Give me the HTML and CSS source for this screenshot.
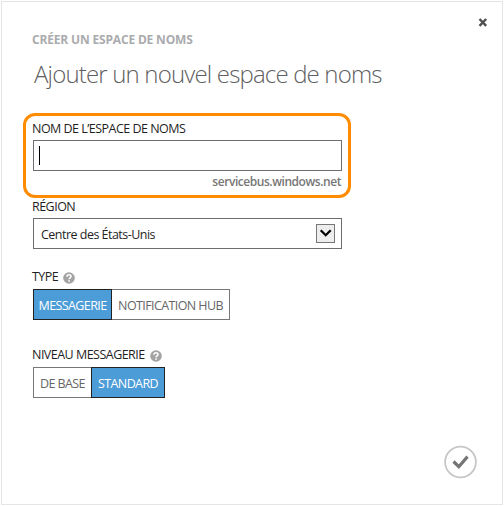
FILE: index.html
```html
<!DOCTYPE html>
<html lang="fr">
<head>
<meta charset="utf-8">
<title>Ajouter un nouvel espace de noms</title>
<link rel="stylesheet" href="styles.css">
</head>
<body>
<main class="dialog">
  <button class="close" aria-label="Fermer"><svg width="10" height="9" viewBox="0 0 10 9"><path d="M1.5 1 8.2 7.8M8.2 1 1.5 7.8" stroke="#505050" stroke-width="2.4" fill="none"/></svg></button>
  <p class="crumb"><span>CRÉER UN ESPACE DE NOMS</span></p>
  <h1 class="title"><span>Ajouter un nouvel espace de noms</span></h1>
  <section class="field name-field">
    <div class="label"><span>NOM DE L’ESPACE DE NOMS</span></div>
    <div class="input"><i class="caret"></i></div>
    <div class="suffix"><span>servicebus.windows.net</span></div>
  </section>
  <section class="field region-field">
    <div class="label"><span>RÉGION</span></div>
    <div class="input select"><span class="value">Centre des États-Unis</span>
      <span class="arrow"><svg width="17" height="17" viewBox="0 0 17 17"><path d="M3.7 5.2 8.7 10.2 13.7 5.2" stroke="#000" stroke-width="2.3" fill="none"/></svg></span>
    </div>
  </section>
  <section class="field type-field">
    <div class="label"><span>TYPE</span><svg class="help" width="12" height="12" viewBox="0 0 12 12"><circle cx="6" cy="6" r="5.8" fill="#a3a3a3"/><path d="M4 4.7C4 2.2 8 2.2 8 4.4 8 5.8 6.1 5.8 6.1 7.3M6.1 8.2V9.8" stroke="#fff" stroke-width="1.6" fill="none"/></svg></div>
    <div class="toggle"><button class="opt on w79"><span>MESSAGERIE</span></button><button class="opt w118"><span>NOTIFICATION HUB</span></button></div>
  </section>
  <section class="field tier-field">
    <div class="label"><span>NIVEAU MESSAGERIE</span><svg class="help" width="12" height="12" viewBox="0 0 12 12"><circle cx="6" cy="6" r="5.8" fill="#a3a3a3"/><path d="M4 4.7C4 2.2 8 2.2 8 4.4 8 5.8 6.1 5.8 6.1 7.3M6.1 8.2V9.8" stroke="#fff" stroke-width="1.6" fill="none"/></svg></div>
    <div class="toggle"><button class="opt w58"><span>DE BASE</span></button><button class="opt on w74"><span>STANDARD</span></button></div>
  </section>
  <footer class="footer"><svg width="34" height="34" viewBox="0 0 34 34"><circle cx="16.5" cy="17" r="15.4" fill="#fff" stroke="#c6c6c6" stroke-width="1.8"/><path d="M9.5 16.5 14.8 21.7 23.5 11.6" stroke="#757575" stroke-width="3.2" fill="none"/></svg></footer>
</main>
</body>
</html>
```
FILE: styles.css
```css
*, *::before { box-sizing: border-box; }
body { margin: 0; background: #fff; font-family: "Open Sans", "Noto Sans", sans-serif; font-size: 12.5px; letter-spacing: -.52px; color: #1f1f1f; }
.dialog { position: relative; width: 502px; height: 504px; margin: 1px; border: 1px solid #e5e5e5; padding: 29px 0 0 30px; display: flex; flex-direction: column; }
span { white-space: nowrap; }
button { font: inherit; letter-spacing: inherit; padding: 0; margin: 0; border: 0; background: none; }
.close { position: absolute; left: 475.5px; top: 15.5px; width: 10px; height: 9px; line-height: 0; }
.crumb { margin: 0; height: 18px; line-height: 18px; font-size: 12px; letter-spacing: -.17px; font-weight: 700; color: #aaabae; }
.title { margin: 6px 0 0 2px; height: 38px; line-height: 38px; font-size: 24px; letter-spacing: -.83px; font-weight: 300; color: #606060; }
.field { width: 310px; }
.name-field { position: relative; height: 78px; margin-top: 27px; }
.name-field::before { content: ""; position: absolute; left: -9px; top: -7px; width: 328px; height: 85px; border: 3px solid #ff8c00; border-radius: 12px; }
.label { display: flex; align-items: center; height: 20px; line-height: 18px; padding-bottom: 2px; }
.input { display: flex; align-items: center; height: 31px; width: 309px; margin-left: 1px; border: 1px solid #6d6e71; }
.caret { width: 1px; height: 19px; margin-left: 5px; background: #000; }
.suffix { height: 22px; line-height: 22px; padding-right: 1px; text-align: right; font-size: 12px; letter-spacing: -.45px; font-weight: 600; color: #777; }
.select { justify-content: space-between; padding: 0 6px 0 7px; }
.value { padding-top: 2px; }
.arrow { width: 19px; height: 19px; border: 1px solid #777; background: #ededed; line-height: 0; }
.type-field { margin-top: 19px; }
.tier-field { margin-top: 26px; }
.type-field .toggle, .tier-field .toggle { margin-top: 1px; }
.help { margin: 1px 0 0 5px; }
.toggle { display: flex; height: 31px; margin-left: 1px; }
.opt { display: flex; align-items: center; justify-content: center; height: 31px; border: 1px solid #777; letter-spacing: -.6px; color: #666; }
.opt span { padding-top: 2px; }
.opt + .opt:not(.on) { border-left: 0; }
.opt.on { background: #4b9cd7; border-color: #222; color: #fff; }
.opt:not(.on):first-child { border-right: 0; }
.w79 { width: 79px; }
.w118 { width: 118px; }
.w58 { width: 58px; }
.w74 { width: 74px; }
.footer { margin: 47px 0 0 412px; height: 34px; line-height: 0; }
```
